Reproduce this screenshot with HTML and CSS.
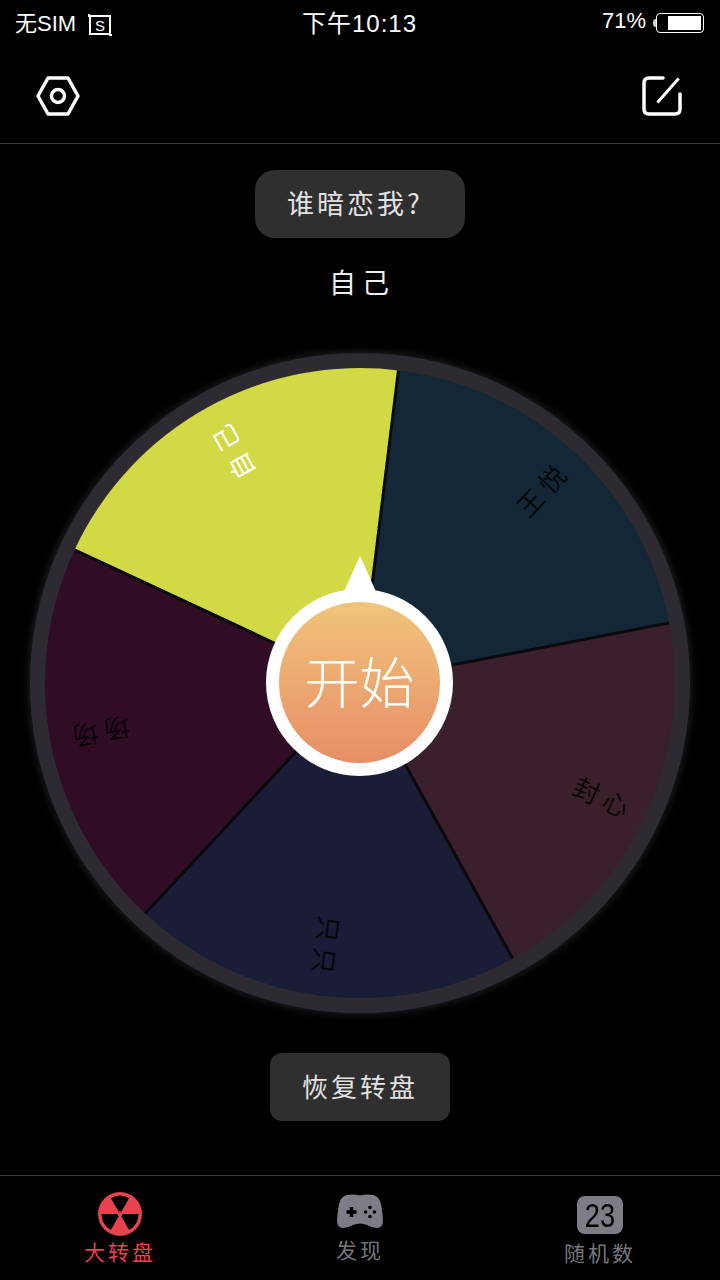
FILE: index.html
```html
<!DOCTYPE html>
<html lang="zh">
    <head>
        <meta charset="utf-8">
        <title>大转盘</title>
        <link rel="stylesheet" href="styles.css">
    </head>
    <body>
        <div class="page">
            <!-- Status bar -->
            <div class="status">
                <div class="status-left">
                    <span>无SIM</span>
                    <svg class="sim-icon" width="26" height="22" viewBox="0 0 26 22">
                        <path d="M1 1H2V2M1 2H23V20H3V2M23 20V21H25" fill="none" stroke="#fff" stroke-width="2"/>
                        <text class="sim-letter" x="13" y="16.500" text-anchor="middle">S</text>
                    </svg>
                </div>
                <div class="status-time">下午10:13</div>
                <div class="status-right">
                    <span>71%</span>
                    <div class="battery-tip"></div>
                    <div class="battery"><div class="battery-fill"></div></div>
                </div>
            </div>

            <!-- Header -->
            <div class="header">
                <svg width="44" height="40" viewBox="0 0 44 40">
                    <path d="M12 2H32L42 20L32 38H12L2 20Z" fill="none" stroke="#fff" stroke-width="3.500" stroke-linejoin="round"/>
                    <circle cx="22" cy="20" r="6.500" fill="none" stroke="#fff" stroke-width="3.500"/>
                </svg>
                <svg width="40" height="40" viewBox="0 0 40 40">
                    <path d="M21 2H7Q2 2 2 7V33Q2 38 7 38H33Q38 38 38 33V18" fill="none" stroke="#fff" stroke-width="3.500" stroke-linecap="round"/>
                    <path d="M38 4L14 25" fill="none" stroke="#fff" stroke-width="3" transform="rotate(-7 26 14)"/>
                </svg>
            </div>

            <div class="main">
                <div class="question">谁暗恋我?</div>
                <div class="answer">自己</div>

                <div class="wheel">
                    <svg class="wheel-svg" width="720" height="676" viewBox="0 345 720 676">
                        <circle class="wheel-ring" cx="360" cy="683" r="330"/>
                        <g>
                            <path fill="#d1d945" d="M360 683L74.500 549.900A315 315 0 0 1 398.400 370.400Z"/>
                            <path fill="#132736" d="M360 683L398.400 370.400A315 315 0 0 1 669.200 622.900Z"/>
                            <path fill="#3a202c" d="M360 683L669.200 622.900A315 315 0 0 1 512.700 958.500Z"/>
                            <path fill="#1b1c36" d="M360 683L512.700 958.500A315 315 0 0 1 145.200 913.400Z"/>
                            <path fill="#300d25" d="M360 683L145.200 913.400A315 315 0 0 1 74.500 549.900Z"/>
                        </g>
                        <path class="dividers" d="M360 683L74.500 549.900M360 683L398.400 370.400M360 683L669.200 622.900M360 683L512.700 958.500M360 683L145.200 913.400"/>
                        <g class="labels">
                            <text class="label-light" x="626" y="683" transform="rotate(241 360 683)">自己</text>
                            <text x="627" y="683" transform="rotate(-47 360 683)">王悦</text>
                            <text x="630" y="683" transform="rotate(25 360 683)">封心</text>
                            <text x="627" y="683" transform="rotate(97 360 683)">只只</text>
                            <text x="626" y="683" transform="rotate(169 360 683)">场场</text>
                        </g>
                    </svg>
                    <div class="hub">
                        <div class="hub-face">开始</div>
                    </div>
                </div>

                <div class="restore">恢复转盘</div>
            </div>

            <!-- Tabs -->
            <div class="tabs">
                <div class="tab tab-active">
                    <svg width="44" height="44" viewBox="0 0 44 44">
                        <circle cx="22" cy="22" r="22" fill="#e8434f"/>
                        <path d="M22 22L12.800 6.100A18.500 18.500 0 0 1 31.200 6.100Z M22 22L40.500 22A18.500 18.500 0 0 1 31.200 38Z M22 22L12.800 38A18.500 18.500 0 0 1 3.500 22Z" fill="#000"/>
                        <circle cx="22" cy="22" r="2.500" fill="#e8434f"/>
                    </svg>
                    <span>大转盘</span>
                </div>
                <div class="tab tab-find">
                    <svg width="46" height="36" viewBox="0 0 46 36">
                        <path d="M10 1Q17 0 23 1.500Q29 0 36 1Q42 2 44 10Q46 20 46 28Q45 34 40 34Q35 34 30 31Q23 28 16 31Q11 34 6 34Q1 34 0 28Q0 20 2 10Q4 2 10 1Z" fill="#7e7d86"/>
                        <path d="M9.500 18H19.500M14.500 13V23" stroke="#000" stroke-width="3.500"/>
                        <circle cx="33" cy="13.500" r="1.800" fill="#000"/>
                        <circle cx="33" cy="22.500" r="1.800" fill="#000"/>
                        <circle cx="28.500" cy="18" r="1.800" fill="#000"/>
                        <circle cx="37.500" cy="18" r="1.800" fill="#000"/>
                    </svg>
                    <span>发现</span>
                </div>
                <div class="tab">
                    <div class="num-icon"><span>23</span></div>
                    <span>随机数</span>
                </div>
            </div>
        </div>
    </body>
</html>
```

FILE: styles.css
```css
* {
    box-sizing: border-box;
}

body {
    margin: 0;
    background-color: #000;
    color: #fff;
    font-family: "Noto Sans CJK SC", "Liberation Sans", sans-serif;
}

.page {
    width: 720px;
    height: 1280px;
    display: flex;
    flex-direction: column;
    overflow: hidden;
}

/* Status bar */
.status {
    height: 46px;
    padding: 0 16px 0 15px;
    display: flex;
    align-items: center;
    justify-content: space-between;
    font-family: "Liberation Sans", "Noto Sans CJK SC", sans-serif;
    font-size: 22px;
}

.status-left {
    width: 230px;
    display: flex;
    align-items: center;
    gap: 11px;
}

.status-left span,
.status-right span {
    margin-top: -4px;
}

.sim-icon {
    display: block;
    margin-top: 3px;
}

.sim-letter {
    font-size: 15px;
    fill: #fff;
}

.status-time {
    font-size: 24px;
    letter-spacing: 1px;
    margin-top: -4px;
}

.status-right {
    width: 230px;
    display: flex;
    align-items: center;
    justify-content: flex-end;
}

.battery-tip {
    width: 3px;
    height: 8px;
    margin-left: 7px;
    background-color: #ccc;
    border-radius: 3px 0 0 3px;
}

.battery {
    width: 48px;
    height: 20px;
    padding: 2px;
    border: 1px solid #fff;
    border-radius: 4px;
    display: flex;
    justify-content: flex-end;
}

.battery-fill {
    width: 33px;
    background-color: #fff;
}

/* Header */
.header {
    height: 98px;
    padding: 30px 38px 0 36px;
    display: flex;
    justify-content: space-between;
    align-items: flex-start;
    border-bottom: 1px solid #3a3a3a;
}

/* Content */
.main {
    flex: 1;
    display: flex;
    flex-direction: column;
    align-items: center;
}

.question {
    width: 210px;
    height: 68px;
    margin-top: 26px;
    padding: 0 10px 4px 0;
    border-radius: 20px;
    background-color: #2f2f2f;
    color: #e2e2e2;
    font-size: 27px;
    letter-spacing: 3px;
    display: flex;
    align-items: center;
    justify-content: center;
}

.answer {
    height: 107px;
    padding: 21px 0 0 4px;
    font-size: 27px;
    line-height: 46px;
    letter-spacing: 6px;
    color: #eee;
}

.wheel {
    position: relative;
    width: 720px;
    height: 676px;
}

.wheel-svg {
    display: block;
}

.wheel-ring {
    fill: #2d2b31;
    filter: drop-shadow(0 0 5px rgba(90, 90, 100, 0.45));
}

.dividers {
    fill: none;
    stroke: #0a0a0e;
    stroke-width: 3;
}

.labels text {
    font-size: 26px;
    letter-spacing: 6px;
    text-anchor: middle;
    dominant-baseline: central;
    fill: rgba(0, 0, 0, 0.8);
}

.labels .label-light {
    fill: #fff;
}

/* Start button, sits over the middle of the wheel */
.hub {
    position: absolute;
    left: 266px;
    top: 244px;
    width: 187px;
    height: 187px;
    padding: 13px;
    border-radius: 50%;
    background-color: #fff;
}

.hub::before {
    content: "";
    position: absolute;
    left: 76px;
    top: -33px;
    border-left: 18px solid transparent;
    border-right: 18px solid transparent;
    border-bottom: 40px solid #fff;
}

.hub-face {
    position: relative;
    height: 100%;
    padding-bottom: 8px;
    border-radius: 50%;
    background: linear-gradient(#f0c47b, #e88e66);
    font-size: 55px;
    font-weight: 300;
    display: flex;
    align-items: center;
    justify-content: center;
}

.restore {
    width: 180px;
    height: 68px;
    margin-top: 32px;
    padding-bottom: 4px;
    border-radius: 12px;
    background-color: #2f2f2f;
    color: #e2e2e2;
    font-size: 26px;
    letter-spacing: 3px;
    display: flex;
    align-items: center;
    justify-content: center;
}

/* Tabs */
.tabs {
    height: 105px;
    border-top: 1px solid #3a3a3a;
    display: grid;
    grid-template-columns: repeat(3, 240px);
}

.tab {
    padding-top: 16px;
    display: flex;
    flex-direction: column;
    align-items: center;
    color: #77767c;
    font-size: 21px;
    line-height: 30px;
    letter-spacing: 3px;
}

.tab-active {
    color: #e8434f;
}

.tab-find svg {
    margin: 2px 0 4px;
}

.num-icon {
    width: 46px;
    height: 38px;
    margin: 4px 0 3px;
    border-radius: 8px;
    background-color: #7e7d86;
    color: #000;
    font-family: "Liberation Sans", sans-serif;
    font-size: 34px;
    line-height: 38px;
    letter-spacing: 0;
    text-align: center;
}

.num-icon span {
    display: inline-block;
    transform: scaleX(0.8);
}
```
